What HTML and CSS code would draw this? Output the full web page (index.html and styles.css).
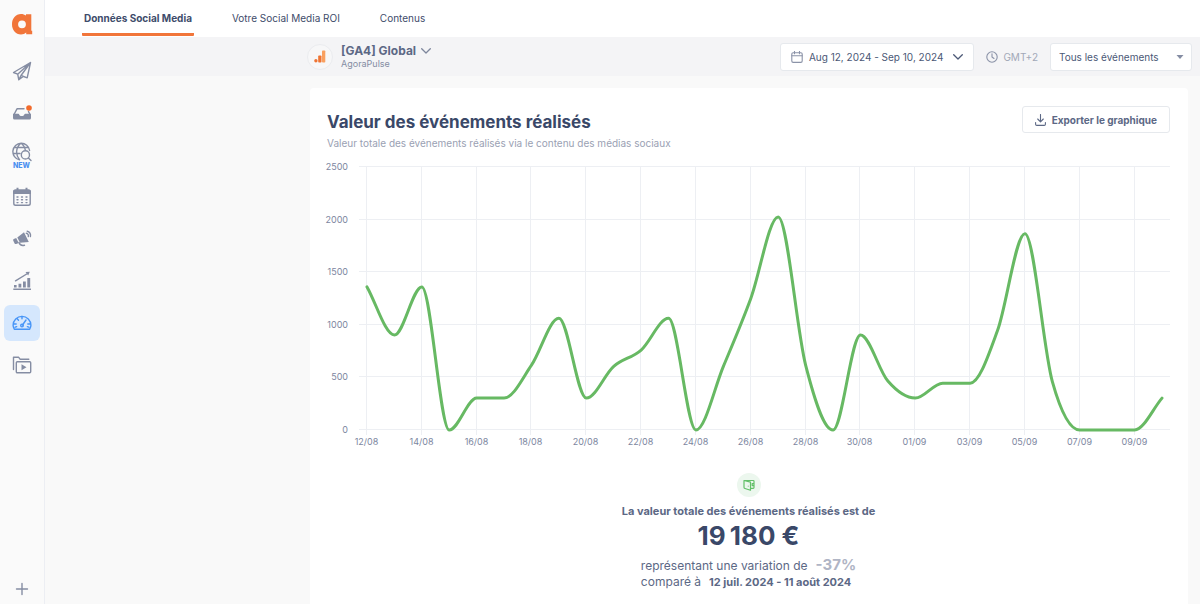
FILE: index.html
```html
<!DOCTYPE html>
<html lang="fr">
<head>
<meta charset="utf-8">
<meta name="viewport" content="width=device-width, initial-scale=1">
<title>Données Social Media</title>
<link rel="stylesheet" href="styles.css">
</head>
<body>
<div class="app">
  <nav class="sidebar" aria-label="Navigation principale">
    <a class="logo" href="#" aria-label="Accueil">
      <svg width="22" height="22" viewBox="0 0 22 22"><path d="M15 1.200V2.600C13.600 1.600 12 1 10 1 4.700 1 1 5.300 1 11.200S4.700 21.500 10 21.500c2.100 0 3.900-.7 5.200-2v1.700h6V17.800h-.9V1.200zM11 7.400a3.900 3.900 0 1 1 0 7.800 3.900 3.900 0 0 1 0-7.800z" fill="#f1753a" fill-rule="evenodd"/></svg>
    </a>
    <div class="menu">
      <a class="item" href="#" aria-label="Publication">
        <svg width="20" height="20" viewBox="0 0 20 20" class="line"><path d="M18.500 1.500 1.500 11.500l4.200 1.700L18.500 1.500 9 14.500l6.200 2.300zM5.700 13.200l1.100 5.600L9 14.500M6.800 18.800l4.400-3.400"/></svg>
      </a>
      <a class="item" href="#" aria-label="Boîte de réception">
        <svg width="20" height="20" viewBox="0 0 20 20"><path d="M2 11.500 5 5.800h7M16.500 8.500l1.500 3" class="line"/><path d="M1 10.700h5.300c.5 0 .7.300.9.700.4 1 1.200 1.600 2.500 1.600s2.200-.6 2.600-1.600c.2-.4.500-.7 1-.7H19v4.300a1.500 1.500 0 0 1-1.500 1.500h-15A1.500 1.500 0 0 1 1 15z" class="solid"/><circle cx="17" cy="5" r="2.800" fill="#f26b2c"/></svg>
      </a>
      <a class="item item-new" href="#">
        <svg width="20" height="20" viewBox="0 0 20 20" class="line"><path d="M7.500 17.900A8.400 8.400 0 1 1 17.600 8.500M8.500 1.500c-5 4.500-5 11.500-1 16.300M9.500 1.500c2.200 1.800 3.300 3.800 3.700 6M2.300 5.500h13.900M1 11.500h7"/><circle cx="13.400" cy="12.900" r="4.100"/><path d="m16.400 15.900 2.600 2.600"/></svg>
        <span class="new">NEW</span>
      </a>
      <a class="item" href="#" aria-label="Calendrier">
        <svg width="20" height="20" viewBox="0 0 20 20"><rect x="1.800" y="3.200" width="16.400" height="15" rx="1.800" class="line"/><path d="M1 4.500A2 2 0 0 1 3 2.500h14a2 2 0 0 1 2 2V7H1zM4.500.8h2v3h-2zM13.500.8h2v3h-2z" class="solid"/><path d="M5 10h1m3.500 0h1m3.500 0h1M5 12.800h1m3.500 0h1m3.500 0h1M5 15.600h1m3.500 0h1m3.500 0h1" class="line"/></svg>
      </a>
      <a class="item" href="#" aria-label="Publicité">
        <svg width="20" height="20" viewBox="0 0 20 20"><path d="M5.300 8.600 12 3.200l4.800 9.700-8.800.8zM1.300 11.700c-.3-.7-.1-1.300.5-1.700l2.400-1 2.500 5-2.500 1c-.7.200-1.300 0-1.600-.6z" class="solid"/><path d="M7 13.500c.7 2.500 3 3.300 5.500 2.800M14.300 4.300c1.500.3 2.400 1.700 2 3.300M15.200 2.200c2.500.4 3.800 2.800 3.200 5.300" class="line"/></svg>
      </a>
      <a class="item" href="#" aria-label="Rapports">
        <svg width="20" height="20" viewBox="0 0 20 20"><path d="M2 14h2.600v2.500H2zM6.500 12.700h2.800v3.800H6.500zM11 10.500h2.800v6H11zM15.300 7h2.900v9.500h-2.900zM1.300 17.600h17.700V19H1.300zM13.500 1l4.300-.3-1.600 3.900z" class="solid"/><path d="m3.500 9.800 12-7.300" class="line"/></svg>
      </a>
      <a class="item item-active" href="#" aria-label="Retour sur investissement" aria-current="page">
        <svg width="20" height="20" viewBox="0 0 20 20" class="line"><path d="M2.300 16.200h15.400c.8-1.200 1.200-2.500 1.200-3.900a8.900 8.900 0 0 0-17.800 0c0 1.400.4 2.700 1.200 3.900zM10 3.500v2.300M5.200 5.800l1.300 1.500M2 11h2.200M15.800 11H18M3.200 14.200l1.500-.5M16.800 14.200l-1.500-.5M10.500 12l3.500-5"/><circle cx="10" cy="12.600" r="1.300"/></svg>
      </a>
      <a class="item" href="#" aria-label="Médiathèque">
        <svg width="20" height="20" viewBox="0 0 20 20"><path d="M1.500 14.500V2.300h5.200l1.500 2h8.600" class="line"/><rect x="4.300" y="6.800" width="14.400" height="11" rx="1" class="line"/><path d="m9.500 9.300 5 3-5 3z" class="solid"/></svg>
      </a>
    </div>
    <button class="add" type="button" aria-label="Ajouter">
      <svg width="14" height="14" viewBox="0 0 14 14" class="line"><path d="M7 1.500v11M1.500 7h11"/></svg>
    </button>
  </nav>

  <div class="content">
    <nav class="tabs" aria-label="Sections">
      <a class="tab tab-active" href="#" aria-current="page">Données Social Media</a>
      <a class="tab" href="#">Votre Social Media ROI</a>
      <a class="tab" href="#">Contenus</a>
    </nav>

    <header class="toolbar">
      <button class="source" type="button">
        <span class="source-icon"><svg width="12" height="13" viewBox="0 0 12 13"><rect x="8" y=".5" width="3.300" height="12" rx=".8" fill="#f9a05f"/><rect x="4.200" y="5.500" width="3.300" height="7" rx=".8" fill="#ef7433"/><circle cx="1.900" cy="10.800" r="1.700" fill="#ef7433"/></svg></span>
        <span class="source-text">
          <span class="source-name">[GA4] Global <svg width="10" height="6" viewBox="0 0 10 6" class="chevron"><path d="m.7.700 4.300 4.300L9.300.700"/></svg></span>
          <span class="source-owner">AgoraPulse</span>
        </span>
      </button>
      <div class="filters">
        <button class="dates" type="button">
          <svg width="12" height="12" viewBox="0 0 12 12" class="thin"><rect x=".8" y="1.800" width="10.400" height="9.600" rx="1.300"/><path d="M.8 4.800h10.400M3.500.3v2.500M8.500.3v2.500"/></svg>
          <span>Aug 12, 2024 - Sep 10, 2024</span>
          <svg width="10" height="6" viewBox="0 0 10 6" class="chevron chevron-dark"><path d="m.7.700 4.300 4.300L9.300.700"/></svg>
        </button>
        <span class="zone">
          <svg width="12" height="12" viewBox="0 0 12 12" class="thin"><circle cx="6" cy="6" r="5.200"/><path d="M6 2.800V6l2 1.500"/></svg>
          GMT+2
        </span>
        <div class="select-box">
          <select class="select" aria-label="Événements"><option>Tous les événements</option></select>
          <svg class="caret" width="8" height="4" viewBox="0 0 8 4"><path d="M.5 0h7L4 4z"/></svg>
        </div>
      </div>
    </header>

    <main class="main">
      <section class="card">
        <div class="card-head">
          <div class="titles">
            <h1 class="title">Valeur des événements réalisés</h1>
            <p class="subtitle">Valeur totale des événements réalisés via le contenu des médias sociaux</p>
          </div>
          <button class="export" type="button">
            <svg width="11" height="12" viewBox="0 0 11 12" class="thin thin-dark"><path d="M5.500.5v7.300M2.700 5l2.800 2.800L8.300 5M.6 8.500v1.700c0 .7.500 1.200 1.200 1.200h7.400c.7 0 1.200-.5 1.200-1.200V8.500"/></svg>
            Exporter le graphique
          </button>
        </div>
        <svg class="chart" id="chart" role="img" aria-label="Valeur des événements par jour"></svg>
        <div class="summary">
          <span class="badge"><svg width="12" height="12" viewBox="0 0 12 12"><path d="M1 1.500 7.500 3.200v8L2 9.500C1.300 9.300 1 9 1 8.300zM1 1.500h9.200c.5 0 .8.300.8.800v6.200c0 .5-.3.800-.8.800H7.500M11 4.600H9.200v2H11M5.300 6.700v.8" fill="none" stroke="#63c069" stroke-width="1.200" stroke-linejoin="round"/></svg></span>
          <p class="summary-label">La valeur totale des événements réalisés est de</p>
          <p class="summary-value">19&#8239;180 €</p>
          <div class="compare">
            <p class="compare-row"><span>représentant une variation de</span><strong class="variation">-37%</strong></p>
            <p class="compare-row"><span>comparé à</span><strong class="period">12 juil. 2024 - 11 août 2024</strong></p>
          </div>
        </div>
      </section>
    </main>
  </div>
</div>
<script src="chart.js"></script>
</body>
</html>
```

FILE: styles.css
```css
* { box-sizing: border-box; }

body {
  margin: 0;
  background: #f9f9f9;
  color: #5c6885;
  font-family: Inter, "Liberation Sans", sans-serif;
  font-size: 10px;
}

h1, p { margin: 0; }
a { color: inherit; text-decoration: none; }
button { font: inherit; color: inherit; cursor: pointer; }
svg { display: block; flex: none; }

.app { display: flex; min-height: 100vh; }

.sidebar {
  display: flex;
  flex-direction: column;
  align-items: center;
  flex: none;
  width: 45px;
  padding: 13px 1px 0 0;
  border-right: 1px solid #eceef3;
  background: #fafafa;
}
.logo { margin-bottom: 18px; }
.menu { display: flex; flex-direction: column; gap: 6px; }
.item {
  display: flex;
  flex-direction: column;
  align-items: center;
  justify-content: center;
  width: 36px;
  height: 36px;
  border-radius: 6px;
  color: #858da3;
}
.item-active { background: #d5e7fd; color: #4795f7; }
.item-new { padding-top: 2px; }
.new { color: #4a90f0; font-size: 7px; font-weight: 800; line-height: 8px; }
.add {
  display: grid;
  place-items: center;
  width: 36px;
  height: 30px;
  margin-top: auto;
  padding: 0;
  border: 0;
  background: none;
  color: #858da3;
}
.line { fill: none; stroke: currentColor; stroke-width: 1.4; stroke-linecap: round; stroke-linejoin: round; }
.solid { fill: currentColor; }

.content { display: flex; flex-direction: column; flex: 1; min-width: 0; }

.tabs { display: flex; gap: 36px; height: 37px; padding: 0 37px 1px; background: #fff; }
.tab { padding: 10px 2px 0; line-height: 16px; color: #3e4c6b; }
.tab-active { border-bottom: 3px solid #f1753a; border-radius: 1px; font-weight: 700; }

.toolbar {
  display: flex;
  align-items: center;
  justify-content: space-between;
  height: 39px;
  padding: 0 8px 0 262px;
  background: #f4f4f6;
}
.source { display: flex; align-items: center; gap: 8px; padding: 0; border: 0; background: none; text-align: left; }
.source-icon {
  display: grid;
  place-items: center;
  width: 26px;
  height: 26px;
  border: 1px solid #ebecef;
  border-radius: 50%;
  background: #f7f7f8;
}
.source-text { display: flex; flex-direction: column; }
.source-name { display: flex; align-items: center; gap: 5px; font-size: 12px; font-weight: 700; line-height: 14px; }
.source-owner { font-size: 9px; line-height: 12px; color: #858da3; }
.chevron { fill: none; stroke: #7d869c; stroke-width: 1.3; stroke-linecap: round; stroke-linejoin: round; }
.chevron-dark { stroke: #4b5876; }

.filters { display: flex; align-items: center; gap: 12px; }
.dates, .select, .export { border: 1px solid #e6e9ed; border-radius: 3px; background: #fff; }
.dates { display: flex; align-items: center; gap: 6px; height: 28px; padding: 0 10px; color: #4b5876; }
.dates .chevron { margin-left: 4px; }
.zone { display: flex; align-items: center; gap: 5px; color: #a2a8b8; }
.thin { fill: none; stroke: #8b93a8; stroke-width: 1.1; stroke-linecap: round; stroke-linejoin: round; }
.thin-dark { stroke: #5c6885; }
.select-box { position: relative; }
.select {
  width: 142px;
  height: 28px;
  padding: 0 24px 0 8px;
  appearance: none;
  color: #4b5876;
  font: inherit;
}
.caret { position: absolute; top: 12px; right: 8px; fill: #858da3; pointer-events: none; }

.main { display: flex; flex: 1; padding: 12px 12px 0 265px; }
.card {
  flex: 1;
  min-width: 0;
  padding: 18px 18px 13px 17px;
  border-radius: 4px 4px 0 0;
  background: #fff;
}
.card-head { display: flex; align-items: flex-start; justify-content: space-between; }
.titles { padding-top: 4px; }
.title { color: #3a4868; font-size: 17px; font-weight: 700; line-height: 24px; }
.subtitle { color: #9aa1b3; line-height: 18px; }
.export { display: flex; align-items: center; gap: 6px; height: 27px; padding: 0 12px; font-weight: 700; }

.chart { width: 100%; height: 300px; overflow: visible; }
.grid { stroke: #edeff3; stroke-width: 1; }
.axis { fill: #7c86a0; font-size: 9px; }
.curve { fill: none; stroke: #67b963; stroke-width: 3; stroke-linecap: round; stroke-linejoin: round; }

.summary { display: flex; flex-direction: column; align-items: center; padding-top: 21px; }
.badge {
  display: grid;
  place-items: center;
  width: 24px;
  height: 24px;
  margin-bottom: 4px;
  border-radius: 50%;
  background: #ecf7ee;
}
.summary-label { font-size: 11px; font-weight: 700; line-height: 20px; }
.summary-value { color: #3a4868; font-size: 26px; font-weight: 700; line-height: 30px; }
.compare { padding-top: 6px; font-size: 12px; line-height: 16px; }
.compare-row { display: flex; align-items: baseline; gap: 8px; }
.variation { color: #b0b5c5; font-size: 15px; }
.period { font-size: 11px; }
```

FILE: chart.js
```js
const values = [1360, 903, 1360, 0, 303, 303, 617, 1062, 303, 605, 760, 1062, 0, 605, 1250,
  2025, 617, 0, 903, 465, 303, 445, 445, 945, 1865, 460, 0, 0, 0, 303];
const firstDay = Date.UTC(2024, 7, 12);
const maxValue = 2500;
const top0 = 15;
const bottom = 278;
const left = 32;
const inset = 8;
const svg = document.getElementById('chart');

function add(name, attributes, text) {
  const node = document.createElementNS('http://www.w3.org/2000/svg', name);
  for (const key in attributes) node.setAttribute(key, attributes[key]);
  if (text !== undefined) node.textContent = text;
  svg.appendChild(node);
}

// Monotone cubic interpolation through the points.
function curve(points) {
  const n = points.length;
  const delta = [];
  for (let i = 0; i < n - 1; i++) {
    delta.push((points[i + 1].y - points[i].y) / (points[i + 1].x - points[i].x));
  }
  const slope = points.map((p, i) => {
    if (i === 0) return delta[0];
    if (i === n - 1) return delta[n - 2];
    return delta[i - 1] * delta[i] <= 0 ? 0 : (delta[i - 1] + delta[i]) / 2;
  });
  for (let i = 0; i < n - 1; i++) {
    if (delta[i] === 0) continue;
    const a = slope[i] / delta[i];
    const b = slope[i + 1] / delta[i];
    const size = a * a + b * b;
    if (size > 9) {
      slope[i] = 3 * a * delta[i] / Math.sqrt(size);
      slope[i + 1] = 3 * b * delta[i] / Math.sqrt(size);
    }
  }
  let d = `M${points[0].x} ${points[0].y}`;
  for (let i = 0; i < n - 1; i++) {
    const p = points[i];
    const q = points[i + 1];
    const h = (q.x - p.x) / 3;
    d += `C${p.x + h} ${p.y + slope[i] * h} ${q.x - h} ${q.y - slope[i + 1] * h} ${q.x} ${q.y}`;
  }
  return d;
}

function draw() {
  svg.replaceChildren();
  const width = svg.clientWidth;
  const start = left + inset;
  const step = (width - inset - start) / (values.length - 1);
  const yOf = value => bottom - value / maxValue * (bottom - top0);

  for (let value = 0; value <= maxValue; value += 500) {
    const y = Math.round(yOf(value)) - 0.5;
    add('line', { class: 'grid', x1: left, x2: width, y1: y, y2: y });
    add('text', { class: 'axis', x: left - 11, y: y + 3, 'text-anchor': 'end' }, value);
  }
  for (let i = 0; i < values.length; i += 2) {
    const x = Math.round(start + i * step) - 0.5;
    const day = new Date(firstDay + i * 86400000);
    const label = String(day.getUTCDate()).padStart(2, '0') + '/' + String(day.getUTCMonth() + 1).padStart(2, '0');
    add('line', { class: 'grid', x1: x, x2: x, y1: top0, y2: bottom + 5 });
    add('text', { class: 'axis', x: x, y: bottom + 15, 'text-anchor': 'middle' }, label);
  }
  add('path', { class: 'curve', d: curve(values.map((v, i) => ({ x: start + i * step, y: yOf(v) }))) });
}

draw();
window.addEventListener('resize', draw);
```
